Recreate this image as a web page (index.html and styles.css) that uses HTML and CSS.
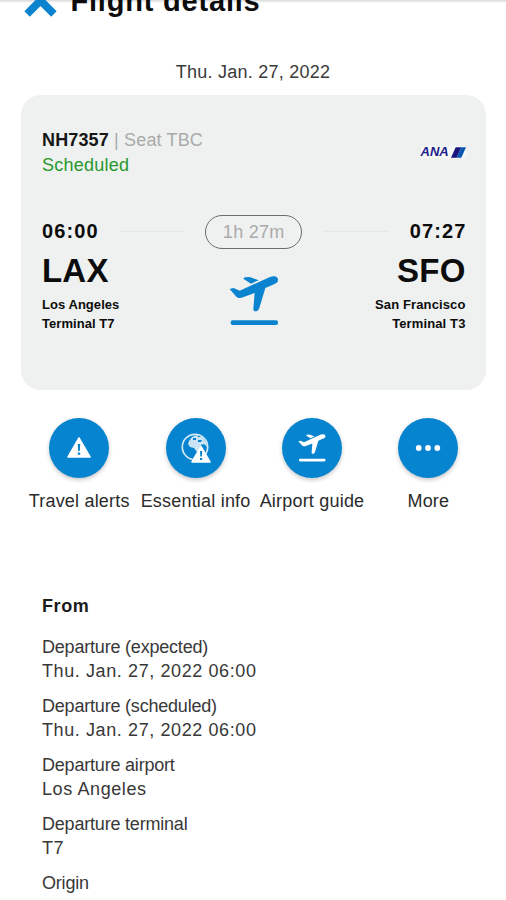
FILE: index.html
```html
<!DOCTYPE html>
<html lang="en">
<head>
<meta charset="utf-8">
<title>Flight details</title>
<link rel="stylesheet" href="styles.css">
</head>
<body>
<svg class="defs" width="0" height="0" aria-hidden="true">
  <symbol id="takeoff" viewBox="40 35 150 150">
    <path d="M83 43L87 39L102 38L129 48L106 58Z"/>
    <path d="M42 74L54 71L72 79L163 38C178 33 188 37 187 48C187 55 180 58 172 61L149 71L131 131C129 138 124 141 119 141C115 141 113 138 113 133L117 86L82 99C73 102 67 101 62 97Z"/>
    <rect x="45" y="168" width="142" height="14" rx="6"/>
  </symbol>
</svg>
<header class="topbar">
  <svg class="close" viewBox="0 0 32 32"><path d="M3 3 L29 29 M29 3 L3 29"/></svg>
  <h1>Flight details</h1>
</header>
<main>
  <p class="date">Thu. Jan. 27, 2022</p>
  <section class="card">
    <div class="card-head">
      <div>
        <p class="flight"><b>NH7357</b> | Seat TBC</p>
        <p class="status">Scheduled</p>
      </div>
      <div class="airline"><span>ANA</span><svg viewBox="0 0 16 11"><path d="M5 0H11L6 11H0Z" fill="#17177d"/><path d="M11 0H16L11 11H6Z" fill="#0a55b0"/></svg></div>
    </div>
    <div class="route">
      <div class="stop">
        <p class="time">06:00</p>
        <p class="code">LAX</p>
        <p class="place">Los Angeles</p>
        <p class="place">Terminal T7</p>
      </div>
      <div class="middle">
        <div class="track"><i></i><span class="duration">1h 27m</span><i></i></div>
        <svg class="plane"><use href="#takeoff"/></svg>
      </div>
      <div class="stop right">
        <p class="time">07:27</p>
        <p class="code">SFO</p>
        <p class="place">San Francisco</p>
        <p class="place">Terminal T3</p>
      </div>
    </div>
  </section>
  <nav class="actions">
    <a class="action"><span class="disc"><svg width="24" height="21" viewBox="0 0 24 21"><path d="M12 1L23 20H1Z" fill="#fff" stroke="#fff" stroke-width="1.500" stroke-linejoin="round"/><path d="M10.800 7h2.400l-.4 7h-1.600zM10.800 15.500h2.400v2.300h-2.400z" fill="#0684d0"/></svg></span>Travel alerts</a>
    <a class="action"><span class="disc"><svg width="30" height="30" viewBox="0 0 30 30"><circle cx="14" cy="14" r="12.700" fill="none" stroke="#d5eaf7" stroke-width="1.700"/><path d="M8 8l3-4 5-2 1 2 4 0 4 5 1 5-3-3-3 1-1 4-3 3-3-4-4-1-2-3z" fill="#c9e4f5"/><path d="M12 5h3v2h-3zM17 7h4l-1 2h-3z" fill="#0684d0"/><path d="M20 13.500L29 29H11Z" fill="#fff" stroke="#fff" stroke-width="1.500" stroke-linejoin="round"/><path d="M19 18h2.200l-.3 5.500h-1.600zM19 25h2.200v2H19z" fill="#0684d0"/></svg></span>Essential info</a>
    <a class="action"><span class="disc"><svg class="mini-plane"><use href="#takeoff"/></svg></span>Airport guide</a>
    <a class="action"><span class="disc"><svg width="26" height="8" viewBox="0 0 26 8"><circle cx="3.700" cy="4" r="2.900"/><circle cx="13" cy="4" r="2.900"/><circle cx="22.300" cy="4" r="2.900"/></svg></span>More</a>
  </nav>
  <section class="details">
    <h2>From</h2>
    <dl>
      <div><dt>Departure (expected)</dt><dd>Thu. Jan. 27, 2022 06:00</dd></div>
      <div><dt>Departure (scheduled)</dt><dd>Thu. Jan. 27, 2022 06:00</dd></div>
      <div><dt>Departure airport</dt><dd>Los Angeles</dd></div>
      <div><dt>Departure terminal</dt><dd>T7</dd></div>
      <div><dt>Origin</dt><dd>Los Angeles</dd></div>
    </dl>
  </section>
</main>
</body>
</html>
```
FILE: styles.css
```css
* { box-sizing: border-box; margin: 0; padding: 0; }
html, body { height: 900px; overflow: hidden; }
body {
  background: #fff;
  color: #222;
  font: 18px/24px "Liberation Sans", Arial, sans-serif;
}
.defs { display: block; }
.topbar {
  display: flex;
  height: 60px;
  padding-left: 24px;
  background: linear-gradient(#d9d9d9, #e6e6e6 1px, #fff 3px);
}
.close { width: 33px; height: 33px; margin-top: -16.500px; fill: none; stroke: #0b83cf; stroke-width: 7.500; }
h1 { margin: -15px 0 0 13.500px; font-size: 29px; line-height: 32px; letter-spacing: .8px; color: #0c0c0c; white-space: nowrap; }
.date { text-align: center; letter-spacing: .25px; color: #3a3a3a; }
.card {
  width: 465px;
  height: 295px;
  margin: 11px 0 0 21px;
  padding: 33px 20.500px 0 21px;
  border-radius: 20px;
  background: #eef1f0;
}
.card-head { display: flex; justify-content: space-between; height: 84px; }
.flight { color: #aaa; letter-spacing: .15px; line-height: 25px; }
.flight b { color: #161616; }
.status { color: #29992f; letter-spacing: .25px; line-height: 25px; }
.airline {
  display: flex;
  align-items: center;
  justify-content: space-between;
  width: 45px;
  height: 12px;
  margin-top: 18px;
  background: #f6f8f8;
  color: #20208a;
  font: italic bold 13px/12px "Liberation Sans", Arial, sans-serif;
}
.airline svg { width: 15px; height: 11px; }
.route { display: flex; justify-content: space-between; }
.stop { width: 77px; color: #0c0c0c; font-weight: bold; white-space: nowrap; }
.time { padding-top: 8px; font-size: 20px; line-height: 22px; letter-spacing: 1.100px; }
.code { margin-top: 10px; font-size: 33px; line-height: 38px; letter-spacing: .2px; }
.place { font-size: 13px; line-height: 19px; letter-spacing: .050px; }
.code + .place { margin-top: 5px; }
.right { display: flex; flex-direction: column; align-items: flex-end; }
.right .place { letter-spacing: .120px; }
.right .time { margin-right: -1px; }
.middle { display: flex; flex-direction: column; align-items: center; width: 268px; }
.track { display: flex; align-items: center; justify-content: space-between; width: 268px; margin-top: 3px; }
.track i { width: 64px; height: 1px; margin-top: -2px; background: #e3e7e6; }
.duration {
  width: 97px;
  height: 34px;
  border: 1.400px solid #6c6c6c;
  border-radius: 18px;
  color: #aaa;
  letter-spacing: .3px;
  line-height: 33px;
  text-align: center;
}
.plane { width: 50px; height: 50px; margin-top: 27px; fill: #0b83cf; }
.actions { display: grid; grid-template-columns: repeat(4, 116.400px); margin: 27.500px 0 0 21px; }
.action { display: flex; flex-direction: column; align-items: center; color: #2b2b2b; letter-spacing: .2px; white-space: nowrap; }
.disc {
  display: flex;
  align-items: center;
  justify-content: center;
  width: 60px;
  height: 60px;
  margin-bottom: 11.500px;
  border-radius: 50%;
  background: #0684d0;
  box-shadow: 0 2px 4px rgba(0, 0, 0, .22);
  fill: #fff;
}
.mini-plane { width: 28px; height: 28px; }
.details { margin: 81px 0 0 42px; }
h2 { font-size: 18px; line-height: 24px; letter-spacing: .6px; color: #1c1c1c; }
dl { margin-top: 17px; color: #383838; }
dl div { height: 59px; }
dt { letter-spacing: -.2px; }
dd { line-height: 25px; letter-spacing: .6px; }
dl div:last-child dd { margin-top: 2px; }
```
